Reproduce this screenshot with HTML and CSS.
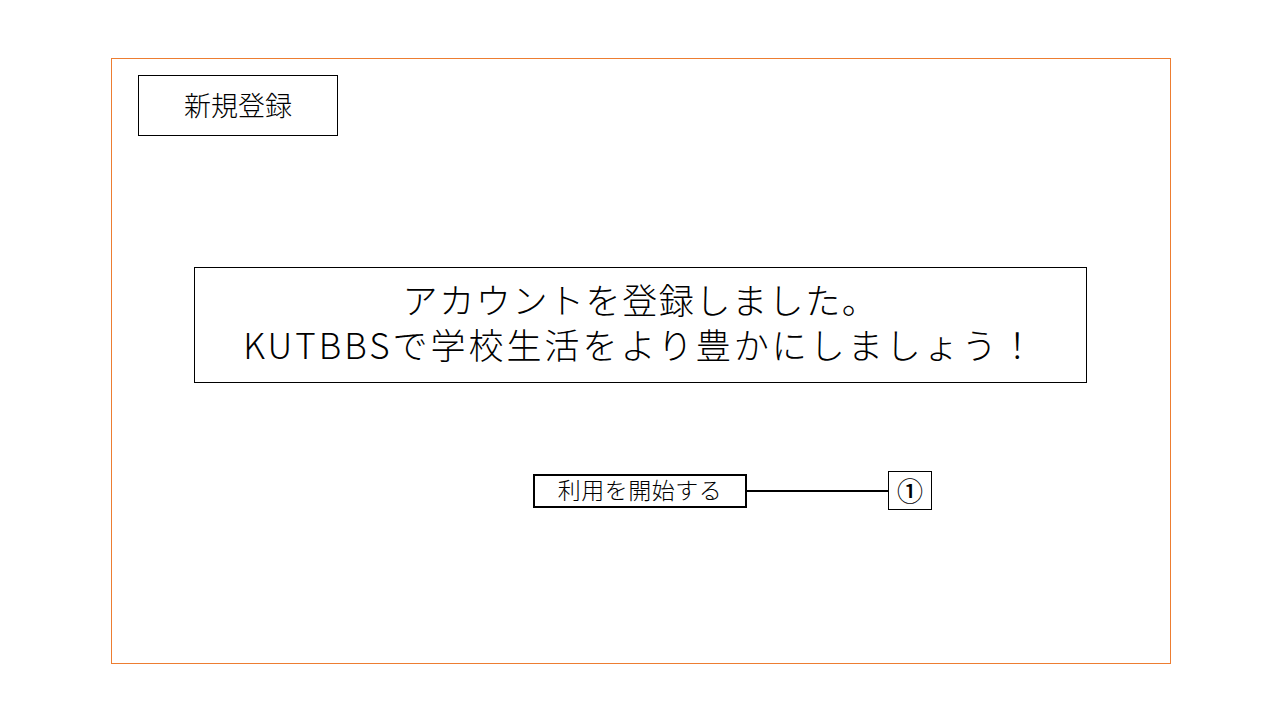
FILE: index.html
```html
<!DOCTYPE html>
<html lang="ja">
<head>
<meta charset="utf-8">
<title>新規登録</title>
<link rel="stylesheet" href="styles.css">
</head>
<body>
<div class="frame">
  <div class="title">新規登録</div>
  <div class="message">
    <div class="line">アカウントを登録しました。</div>
    <div class="line wide">KUTBBSで学校生活をより豊かにしましょう！</div>
  </div>
  <div class="action-row">
    <div class="start-btn">利用を開始する</div>
    <div class="connector"></div>
    <div class="marker">①</div>
  </div>
</div>
</body>
</html>
```
FILE: styles.css
```css
* { box-sizing: border-box; }
html, body { margin: 0; padding: 0; background: #fff; }
body {
  font-family: "Noto Sans CJK JP", "Noto Sans", sans-serif;
  color: #000;
  width: 1280px;
  height: 720px;
  overflow: hidden;
}
.frame {
  margin: 58px 0 0 111px;
  width: 1060px;
  height: 606px;
  border: 1px solid #ED7D31;
  display: flex;
  flex-direction: column;
  align-items: flex-start;
}
.title {
  margin: 16px 0 0 26px;
  width: 200px;
  height: 61px;
  border: 1px solid #000;
  display: flex;
  align-items: center;
  justify-content: center;
  font-size: 27px;
  font-weight: 300;
  padding-bottom: 3px;
}
.message {
  margin: 131px 0 0 82px;
  width: 893px;
  height: 116px;
  border: 1px solid #000;
  display: flex;
  flex-direction: column;
  align-items: center;
  justify-content: center;
  gap: 4px;
  font-size: 35px;
  font-weight: 300;
  letter-spacing: 1.6px;
  padding-bottom: 8px;
}
.message .line {
  line-height: 41px;
}
.message .wide {
  letter-spacing: 3px;
}
.action-row {
  margin: 88px 0 0 421px;
  display: flex;
  align-items: center;
}
.start-btn {
  width: 214px;
  height: 34px;
  border: 2px solid #000;
  display: flex;
  align-items: center;
  justify-content: center;
  font-size: 23px;
  font-weight: 300;
  letter-spacing: 0.5px;
  padding-bottom: 3px;
}
.connector {
  width: 141px;
  height: 2px;
  background: #000;
}
.marker {
  width: 44px;
  height: 39px;
  border: 1px solid #000;
  display: flex;
  align-items: center;
  justify-content: center;
  font-size: 26px;
  font-weight: 500;
  padding-bottom: 2px;
}
```
